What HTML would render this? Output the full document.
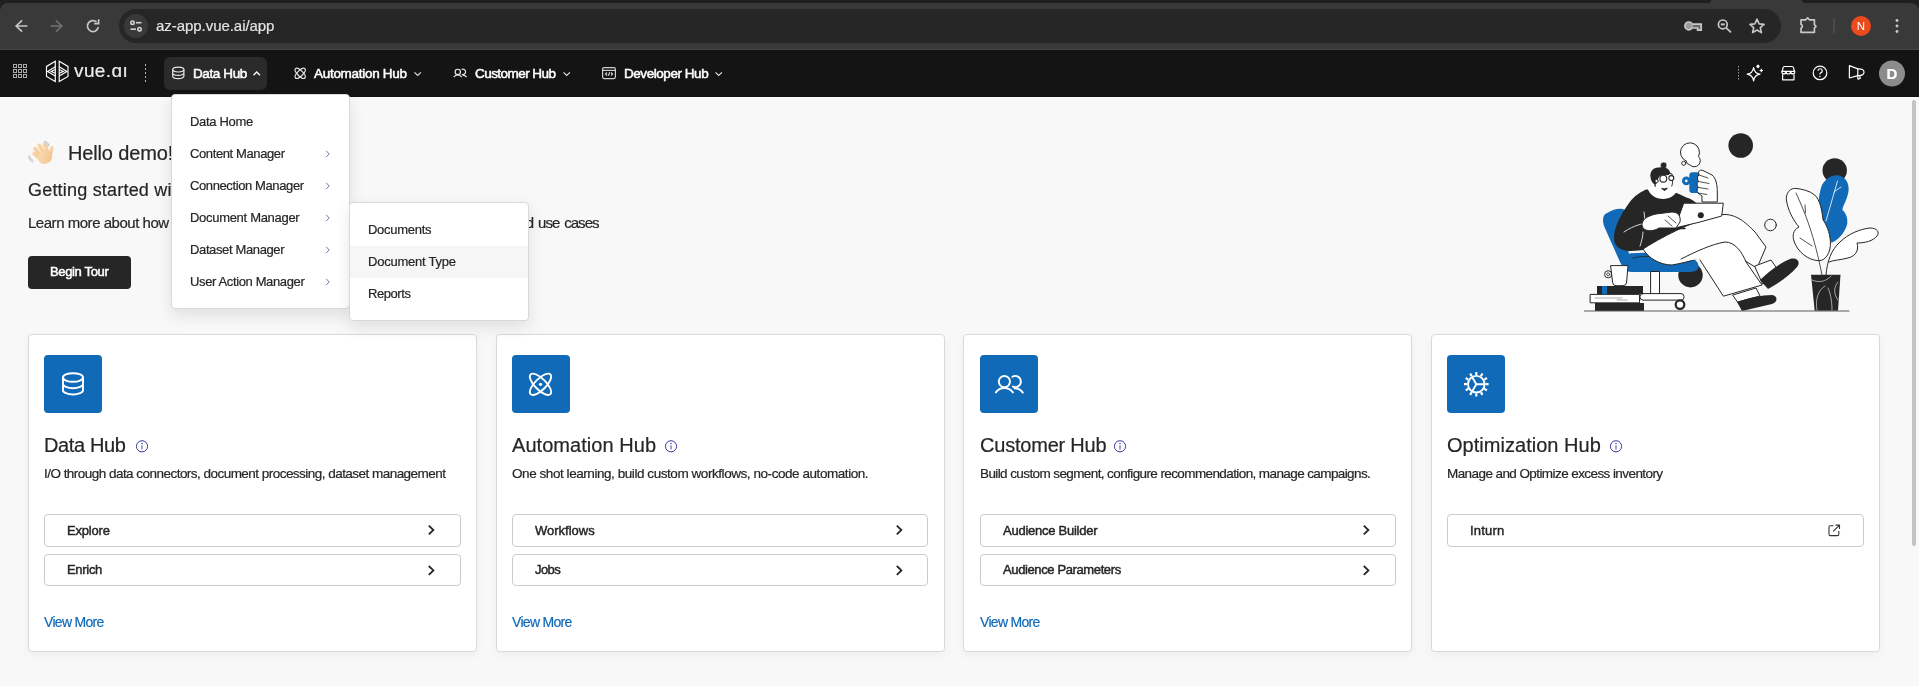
<!DOCTYPE html>
<html><head><meta charset="utf-8">
<style>
*{box-sizing:border-box;margin:0;padding:0}
html,body{width:1919px;height:686px;overflow:hidden;background:#f8f8f8;font-family:"Liberation Sans",sans-serif;color:#262626}
.card,.menu,.t{-webkit-text-stroke:0.2px currentColor}
.a{position:absolute}
.t{position:absolute;white-space:nowrap;line-height:20px;will-change:transform}
svg{position:absolute;overflow:visible}
.nt{will-change:transform;position:absolute;top:64px;color:#fff;font-weight:normal;-webkit-text-stroke:0.5px #fff;font-size:13.5px;letter-spacing:-0.38px;line-height:20px;white-space:nowrap}
.card{will-change:transform;position:absolute;top:334px;width:449px;height:318px;background:#fff;border:1px solid #d9d9d9;border-radius:4px;box-shadow:0 3px 10px rgba(0,0,0,0.045)}
.ib{position:absolute;left:15px;top:20px;width:58px;height:58px;background:#106ab7;border-radius:4px}
.ct{position:absolute;left:15px;top:98px;font-size:20px;line-height:24px;color:#262626;white-space:nowrap}
.cd{position:absolute;left:15px;top:129px;font-size:13.5px;line-height:20px;color:#262626;white-space:nowrap;letter-spacing:-0.53px}
.cb{position:absolute;left:15px;width:417px;height:33px;border:1px solid #cccccc;border-radius:4px;font-weight:normal;-webkit-text-stroke:0.45px #262626;font-size:13px;line-height:31px;padding-left:22px;color:#262626;white-space:nowrap}
.vm{position:absolute;left:15px;top:277px;font-size:14px;color:#106ab7;line-height:20px;letter-spacing:-0.69px}
.menu{will-change:transform;position:absolute;background:#fff;border:1px solid #d9d9d9;border-radius:4px;box-shadow:0 6px 16px rgba(0,0,0,0.10);padding:11px 0 9px}
.mi{height:32px;line-height:32px;font-size:13px;padding-left:18px;color:#262626;position:relative;white-space:nowrap;letter-spacing:-0.35px}
.chev{position:absolute;left:153px;top:12px}
.c3>div{margin-left:1px}
.c3>.cb{width:416px}
</style></head><body>
<!-- browser chrome -->
<div class="a" style="left:0;top:0;width:1919px;height:50px;background:#1f1f1f"></div>
<div class="a" style="left:1703px;top:0;width:107px;height:4px;background:#393939"></div>
<div class="a" style="left:1695px;top:0;width:16px;height:3px;background:#1f1f1f;border-radius:0 0 8px 0"></div>
<div class="a" style="left:1802px;top:0;width:16px;height:3px;background:#1f1f1f;border-radius:0 0 0 8px"></div>
<div class="a" style="left:0;top:3px;width:1919px;height:47px;background:#393939;border-radius:8px 8px 0 0"></div>
<div class="a" style="left:0;top:49px;width:1919px;height:1px;background:#474747"></div>
<div class="a" style="left:119px;top:9px;width:1662px;height:34px;border-radius:17px;background:#262626"></div>
<div class="a" style="left:124px;top:14px;width:24px;height:24px;border-radius:12px;background:#393939"></div>
<div class="t" style="left:156px;top:16px;font-size:15px;color:#e3e3e3;letter-spacing:-0.05px">az-app.vue.ai/app</div>
<svg width="1919" height="50" style="left:0;top:0">
 <g fill="none" stroke="#c8c8c8" stroke-width="1.7" stroke-linecap="square">
  <path d="M26.5 26H16.5M21.5 21L16.2 26L21.5 31"/>
 </g>
 <g fill="none" stroke="#717171" stroke-width="1.7" stroke-linecap="square">
  <path d="M51.5 26H61.5M56.5 21L61.8 26L56.5 31"/>
 </g>
 <g fill="none" stroke="#c8c8c8" stroke-width="1.7">
  <path d="M98.3 27.2A5.5 5.5 0 1 1 96.5 21.9"/>
  <path d="M98.6 20V23.6H95" stroke-linecap="square"/>
 </g>
 <g fill="none" stroke="#d0d0d0" stroke-width="1.6">
  <circle cx="132.5" cy="22.7" r="1.7"/><path d="M136 22.7H141.5"/>
  <path d="M130.5 29.2H136"/><circle cx="139.5" cy="29.2" r="1.7"/>
 </g>
 <!-- key -->
 <g fill="none" stroke="#c8c8c8" stroke-width="1.7">
  <circle cx="1688.8" cy="25.9" r="3.9" fill="#9a9a9a"/>
  <path d="M1692.7 24.2H1701.2V30.2H1697.6V28H1692.7" fill="#6a6a6a"/>
 </g>
 <!-- zoom -->
 <g fill="none" stroke="#c8c8c8" stroke-width="1.7">
  <circle cx="1722.8" cy="24.4" r="4.4"/><path d="M1726.2 27.8L1731 32.4"/><path d="M1720.8 24.4H1724.8" stroke-width="2"/>
 </g>
 <!-- star -->
 <path d="M1757 19.2L1759.1 23.9L1764.1 24.4L1760.3 27.7L1761.4 32.6L1757 30L1752.6 32.6L1753.7 27.7L1749.9 24.4L1754.9 23.9Z" fill="none" stroke="#c8c8c8" stroke-width="1.6" stroke-linejoin="round"/>
 <!-- puzzle -->
 <path d="M1801 19.8H1805.8L1807.6 17.8L1809.4 19.8H1814.4V24.6L1816 26.3L1814.4 28V32.3H1801V28.2A2.2 2.2 0 0 0 1801 24.2Z" fill="none" stroke="#c8c8c8" stroke-width="1.7" stroke-linejoin="round"/>
 <path d="M1834 18.5V33.5" stroke="#5c5c5c" stroke-width="1"/>
 <circle cx="1861" cy="26" r="10" fill="#ec4a1c"/>
 <g fill="#c8c8c8"><circle cx="1897" cy="20.5" r="1.45"/><circle cx="1897" cy="26" r="1.45"/><circle cx="1897" cy="31.5" r="1.45"/></g>
</svg>
<div class="t" style="left:1851px;width:20px;text-align:center;top:15.7px;font-size:11.5px;color:#fff;font-weight:normal;-webkit-text-stroke:0">N</div>

<!-- app nav -->
<div class="a" style="left:0;top:50px;width:1919px;height:47px;background:#141414"></div>
<div class="a" style="left:164px;top:57px;width:103px;height:33px;background:#2a2a2a;border-radius:6px"></div>
<svg width="1919" height="97" style="left:0;top:0">
 <!-- grid -->
 <g fill="none" stroke="#a9a9a9" stroke-width="1">
  <rect x="13.5" y="64.5" width="3" height="3"/><rect x="18.5" y="64.5" width="3" height="3"/><rect x="23.5" y="64.5" width="3" height="3"/>
  <rect x="13.5" y="69.5" width="3" height="3"/><rect x="18.5" y="69.5" width="3" height="3"/><rect x="23.5" y="69.5" width="3" height="3"/>
  <rect x="13.5" y="74.5" width="3" height="3"/><rect x="18.5" y="74.5" width="3" height="3"/><rect x="23.5" y="74.5" width="3" height="3"/>
 </g>
 <!-- logo -->
 <g fill="none" stroke="#fff" stroke-width="1.15" stroke-linejoin="miter">
  <path d="M55.3 61.3L46.5 66.4V76.4L55.3 81.6Z"/>
  <path d="M55.3 66.7L47.6 71.4L55.3 76.1"/>
  <path d="M55.3 69.5L51.2 71.4L55.3 73.3"/>
  <path d="M59.2 61.3L68.0 66.4V76.4L59.2 81.6Z"/>
  <path d="M59.2 66.7L66.9 71.4L59.2 76.1"/>
  <path d="M59.2 69.5L63.3 71.4L59.2 73.3"/>
 </g>
 <path d="M145.5 64V82" stroke="#b0b0b0" stroke-width="1" stroke-dasharray="2 2"/>
 <!-- db icon -->
 <g fill="none" stroke="#e6e6e6" stroke-width="1.2">
  <ellipse cx="178.3" cy="69.6" rx="5.6" ry="2.4"/>
  <path d="M172.7 69.6V76.3A5.6 2.4 0 0 0 183.9 76.3V69.6M172.7 73A5.6 2.4 0 0 0 183.9 73"/>
 </g>
 <path d="M253.5 75.2L256.7 72L259.9 75.2" fill="none" stroke="#fff" stroke-width="1.3"/>
 <!-- atom -->
 <g fill="none" stroke="#e6e6e6" stroke-width="1.2">
  <ellipse cx="300.2" cy="73.3" rx="6.6" ry="2.7" transform="rotate(45 300.2 73.3)"/>
  <ellipse cx="300.2" cy="73.3" rx="6.6" ry="2.7" transform="rotate(-45 300.2 73.3)"/>
 </g>
 <path d="M414.5 72.3L417.7 75.5L420.9 72.3" fill="none" stroke="#ddd" stroke-width="1.2"/>
 <!-- customers -->
 <g fill="none" stroke="#e6e6e6" stroke-width="1.2">
  <g transform="translate(446.2 59.3) scale(0.475)" stroke-width="2.5"><circle cx="24.4" cy="26.6" r="5.6"/><path d="M15.8 37.4A10.6 10.6 0 0 1 32.9 37.4"/><path d="M32.4 21.7A5.6 5.6 0 1 1 32.9 31.6"/><path d="M34.6 33.2A10 10 0 0 1 42.8 37.6"/></g>
 </g>
 <path d="M563.5 72.3L566.7 75.5L569.9 72.3" fill="none" stroke="#ddd" stroke-width="1.2"/>
 <!-- developer -->
 <g fill="none" stroke="#cfcfcf" stroke-width="1.2">
  <rect x="602.6" y="67.6" width="12.8" height="11" rx="1.5"/>
  <path d="M602.6 70.4H615.4"/>
  <path d="M607 72.5L605.5 74L607 75.5M611 72.5L612.5 74L611 75.5M609.7 72.2L608.3 75.8"/>
 </g>
 <path d="M715.5 72.3L718.7 75.5L721.9 72.3" fill="none" stroke="#ddd" stroke-width="1.2"/>
 <!-- right icons -->
 <path d="M1738.5 66V81" stroke="#9a9a9a" stroke-width="1" stroke-dasharray="1.5 1.5"/>
 <g fill="none" stroke="#fff" stroke-width="1.2" stroke-linejoin="round">
  <path d="M1753.6 67.6Q1754.5 73.3 1760 74.2Q1754.5 75.1 1753.6 80.8Q1752.7 75.1 1747.2 74.2Q1752.7 73.3 1753.6 67.6Z"/>
  <path d="M1761.3 68.8V72.2M1759.6 70.5H1763"/>
  <path d="M1758 65.2L1759.2 66.4L1758 67.6L1756.8 66.4Z" fill="#fff"/>
  <path d="M1782.3 71.2L1783 67.8Q1783.3 66.5 1784.6 66.5H1792Q1793.3 66.5 1793.6 67.8L1794.3 71.2"/>
  <path d="M1781.8 71.4H1794.8Q1795 73.8 1792.9 73.9Q1790.8 73.9 1790.6 71.6Q1790.4 74 1788.3 74Q1786.2 74 1786 71.6Q1785.8 73.9 1783.7 73.9Q1781.6 73.8 1781.8 71.4Z"/>
  <path d="M1782.6 74.2V79.8H1794V74.2"/>
  <circle cx="1820" cy="72.9" r="6.8"/>
  <path d="M1818 70.8A2.1 2.1 0 1 1 1820.5 72.9Q1819.9 73.3 1819.9 74.6"/>
  <path d="M1849.4 65.6V78L1857.8 75.6Q1864 75.8 1864 72.2Q1864 68.6 1857.8 68.9Z"/>
  <path d="M1857.8 68.9V75.6M1857.5 75.6L1858 79.2L1860.2 78.5L1859.8 75.6"/>
 </g>
 <circle cx="1819.9" cy="76.4" r="0.75" fill="#fff"/>
 <circle cx="1892" cy="73.5" r="13" fill="#8c8c8c"/>
</svg>
<div class="t" style="left:74px;top:58.5px;font-size:19px;color:#ececec;letter-spacing:0.4px;line-height:24px">vue.ɑı</div>
<div class="nt" style="left:193px">Data Hub</div>
<div class="nt" style="left:314px;letter-spacing:-0.29px">Automation Hub</div>
<div class="nt" style="left:475px;letter-spacing:-0.55px">Customer Hub</div>
<div class="nt" style="left:624px;letter-spacing:-0.45px">Developer Hub</div>
<div class="t" style="left:1879px;width:26px;text-align:center;top:63.5px;font-size:15px;font-weight:bold;color:#fff">D</div>

<!-- hello section -->
<svg width="1919" height="686" style="left:0;top:0">
 <defs><linearGradient id="hg" x1="0" y1="0" x2="1" y2="1"><stop offset="0" stop-color="#fbdcb4"/><stop offset="1" stop-color="#f2c28e"/></linearGradient></defs>
 <g fill="url(#hg)">
  <rect x="35.5" y="146" width="3.8" height="12" rx="1.9" transform="rotate(-38 37.4 152)"/>
  <rect x="39.5" y="143" width="3.8" height="13" rx="1.9" transform="rotate(-30 41.4 149.5)"/>
  <rect x="35" y="150.5" width="3.8" height="11" rx="1.9" transform="rotate(-50 36.9 156)"/>
  <rect x="44" y="142.5" width="3.8" height="12" rx="1.9" transform="rotate(-25 45.9 148.5)"/>
  <rect x="49.3" y="146" width="3.6" height="10" rx="1.8" transform="rotate(12 51.1 151)"/>
  <ellipse cx="45" cy="157" rx="7.5" ry="6.8" transform="rotate(-35 45 157)"/>
 </g>
 <g fill="none" stroke="#b5b5b5" stroke-width="0.9">
  <path d="M43.5 141.5Q47 143 48 147M45 141Q48.5 142.5 49.2 146"/>
  <path d="M29 155Q30 159 33.5 161M28.5 157Q29.5 161 33 162.5"/>
 </g>
</svg>

<div class="t" style="left:67.5px;top:140.7px;font-size:20px;line-height:24px;letter-spacing:-0.15px">Hello demo! Welcome back</div>
<div class="t" style="left:28px;top:178px;font-size:18px;line-height:24px;letter-spacing:0.2px">Getting started with vue.ai platform</div>
<div class="t" style="left:28px;top:213px;font-size:15px;letter-spacing:-0.47px">Learn more about how vue.ai can help your business</div>
<div class="t" style="left:511px;top:213px;font-size:15px;letter-spacing:-0.95px;word-spacing:1.6px">and use cases</div>
<div class="a" style="left:28px;top:256px;width:103px;height:33px;background:#262626;border-radius:4px"></div>
<div class="t" style="left:50px;top:262px;font-size:13px;font-weight:normal;-webkit-text-stroke:0.5px #fff;color:#fff;letter-spacing:-0.35px">Begin Tour</div>

<!-- illustration placeholder -->
<svg width="1919" height="686" style="left:0;top:0">
 <g stroke="#262626" stroke-width="1" stroke-linejoin="round" stroke-linecap="round">
  <circle cx="1740.7" cy="145.5" r="12.3" fill="#262626" stroke="none"/>
  <circle cx="1834.7" cy="170.5" r="12.2" fill="#262626" stroke="none"/>
  <circle cx="1770.5" cy="225" r="5.8" fill="none"/>
  <!-- thought bubble -->
  <path d="M1686 161A9.5 9.5 0 1 1 1698.5 156.5A5 5 0 1 1 1690 165A5 5 0 0 1 1686 161Z" fill="#fff"/>
  <circle cx="1683.7" cy="163.3" r="2" fill="#fff"/>
  <!-- plant -->
  <path d="M1837.6 175.3C1845 176 1850 183 1848.4 192C1847 200 1843 205 1842.4 210C1846 213 1848 218 1847.2 224C1845 233 1838 240 1831.6 242.7C1825 236 1819 224 1818.3 210C1818 200 1820 190 1822 185C1826 178 1832 175 1837.6 175.3Z" fill="#106ab7" stroke="none"/>
  <path d="M1837.5 181L1826 221M1834 192L1841 187" stroke="#fff" fill="none" stroke-width="0.8"/>
  <path d="M1796.7 188.5C1790 187 1785 194 1786.6 201C1788 210 1793 220 1799 227C1793 230 1792 236 1794.3 242C1798 252 1808 260 1818.3 260.7C1826 261 1831 252 1830.4 241.5C1830 232 1826 224 1823 219.8C1822 210 1820 200 1814.7 195C1810 191 1802 189 1796.7 188.5Z" fill="#fff"/>
  <path d="M1796 193C1806 215 1814 235 1822 275M1805 205L1805.5 213M1800 238L1812 246" fill="none" stroke-width="0.8"/>
  <path d="M1826 275C1827 262 1831 250 1840 242C1848 234 1860 229 1870 228C1877 228 1880 232 1877 236C1873 241 1865 243 1857 243C1859 250 1856 256 1848 258C1840 260 1834 260 1829 262" fill="#fff"/>
  <path d="M1811 274.7H1840.5L1838 310.8H1814.7Z" fill="#262626" stroke="none"/>
  <path d="M1812 280C1818 283 1826 282 1831 276M1817 310C1815 300 1818 290 1825 286M1838 300C1834 295 1833 288 1838 282M1832 310C1832 300 1830 292 1828 288" stroke="#ddd" stroke-width="0.7" fill="none"/>
  <!-- chair -->
  <circle cx="1690.5" cy="275.2" r="12.2" fill="#262626" stroke="none"/>
  <path d="M1607 213C1603 214 1602 220 1604 226L1620 262C1622 266 1626 268 1630 268L1625 210C1620 207 1612 210 1607 213Z" fill="#106ab7" stroke="none"/>
  <path d="M1620 255C1640 251 1665 253 1690 258C1699 260 1700 267 1697 270C1694 272 1690 272 1686 272H1632C1624 272 1620 266 1620 255Z" fill="#106ab7" stroke="none"/>
  <path d="M1633 258C1645 255 1660 256 1684 261" stroke="#262626" fill="none" stroke-width="0.8"/>
  <rect x="1651" y="271.5" width="8.5" height="22.5" fill="#fff"/>
  <rect x="1640" y="293.6" width="44" height="6.5" rx="3" fill="#fff"/>
  <circle cx="1680" cy="304.6" r="4.3" fill="#fff" stroke="#262626" stroke-width="2.2"/>
  <!-- torso -->
  <path d="M1646 189.5C1638 193 1632 198 1627 206C1620 216 1614 228 1614 238C1614 246 1620 251 1630 251C1645 251 1660 246 1675 240L1700 232L1703 212C1700 205 1693 199 1686.4 197.5C1678 193 1670 190 1662 190Z" fill="#262626" stroke="none"/>
  <path d="M1624 232C1634 225 1645 222 1660 222M1644 212L1645 220M1640 246C1642 240 1643 236 1643 232" stroke="#fff" stroke-width="0.8" fill="none"/>
  <!-- head -->
  <path d="M1655 186L1656 180C1655 176 1658 172 1664 172L1672 174C1673 180 1673 186 1670 189L1667 191C1663 192 1658 190 1655 186Z" fill="#fff"/>
  <path d="M1647.5 188.5C1652 186 1655 186 1658 187L1664 190L1670 187C1673 186 1676 187 1678 189C1676 195 1670 199 1663 199C1656 199 1650 195 1647.5 188.5Z" fill="#fff" stroke="none"/>
  <circle cx="1663.7" cy="165.4" r="3.4" fill="#262626" stroke="#fff" stroke-width="0.7"/>
  <path d="M1650.5 177C1649.5 171 1654 167 1659 167.5C1664 166.5 1669 168 1670.2 172.5C1670.5 175 1668 175.5 1664 175C1660 175 1658.5 177 1658 180C1657.5 183 1656 185 1654.5 184.5C1652 183 1650.8 180 1650.5 177Z" fill="#262626" stroke="none"/>
  <circle cx="1656.6" cy="181" r="1.6" fill="#fff" stroke-width="0.8"/>
  <circle cx="1663.3" cy="178.7" r="3.4" fill="#fff" stroke-width="1.1"/>
  <circle cx="1671.3" cy="178.1" r="2.5" fill="#fff" stroke-width="1.1"/>
  <path d="M1662 188.5L1664.5 190.3L1667 188.2" fill="#262626" stroke-width="1.3"/>
  <!-- mug + hand -->
  <rect x="1689.3" y="172.3" width="10.8" height="20.8" rx="3" fill="#106ab7" stroke="none"/>
  <circle cx="1686.3" cy="180.9" r="4.3" fill="#106ab7" stroke="none"/>
  <circle cx="1686.3" cy="180.9" r="1.3" fill="#fff" stroke="none"/>
  <path d="M1702 201.6V196L1698 193C1696.5 191 1697 188.5 1698.5 187.5C1697 186 1696.5 183 1698.5 181.5C1697 179.5 1697 176 1699 175L1698.5 172.5C1699 170 1701 169.5 1704 171L1712 175C1716 178 1717.3 185 1717.3 192V201.6Z" fill="#fff"/>
  <path d="M1698.5 181.5L1709 183.5M1698.5 187.5L1708 189M1698 193L1707 194.5M1699 175L1708 178" fill="none" stroke-width="0.8"/>
  <!-- legs -->
  <path d="M1643 249C1660 238 1690 222 1718 215C1735 212 1745 222 1755 232L1766 247L1757 268C1748 263 1738 256 1728 250C1710 255 1690 262 1672 265C1660 265 1648 258 1643 249Z" fill="#fff"/>
  <path d="M1681 259C1695 252 1712 244 1725 242C1735 242 1742 252 1746 262L1762 285L1723.4 296.2L1700 260" fill="#fff"/>
  <path d="M1755 266L1771 260L1778 270L1763 284Z" fill="#fff"/>
  <path d="M1733 295L1756 288L1760 296L1738 302Z" fill="#fff"/>
  <path d="M1760 280C1768 272 1780 263 1790 259C1797 257 1801 262 1797 267C1790 275 1779 283 1768 289Z" fill="#262626" stroke="none"/>
  <path d="M1737 302C1748 298 1762 295 1772 295C1778 296 1778 302 1772 304L1742 311Z" fill="#262626" stroke="none"/>
  <!-- laptop -->
  <path d="M1684 203.2H1723.3L1721.7 216L1700 222L1675 228Z" fill="#fff"/>
  <path d="M1657.5 228.5H1685" fill="none" stroke-width="1.4"/>
  <circle cx="1700.8" cy="215.2" r="3" fill="#262626" stroke="none"/>
  <!-- hand on laptop -->
  <path d="M1642 226C1641 220 1647 216 1656 214L1672 212C1678 212 1681 216 1680 222L1676 228H1659C1653 232 1644 232 1642 226Z" fill="#fff"/>
  <path d="M1668 216L1676 223M1665 220L1672 226" fill="none" stroke-width="0.8"/>
  <!-- books & cup -->
  <rect x="1595" y="303" width="49" height="8" fill="#262626" stroke="none"/>
  <rect x="1590.5" y="294.4" width="49" height="8.4" fill="#fff"/>
  <path d="M1595 298H1622M1617 300H1627" stroke-width="0.7" fill="none" stroke="#888"/>
  <rect x="1597" y="286" width="46" height="8" fill="#262626" stroke="none"/>
  <rect x="1602" y="286" width="5" height="8" fill="#106ab7" stroke="none"/>
  <circle cx="1608.2" cy="274.3" r="3.6" fill="#fff"/>
  <circle cx="1608.2" cy="274.3" r="1.5" fill="none" stroke-width="0.8"/>
  <path d="M1611 265.6H1628L1626.5 283Q1626 285.7 1623 285.7H1616Q1613 285.7 1612.7 283Z" fill="#fff"/>

  <path d="M1584.4 311H1849" stroke="#5a5a5a" stroke-width="1.2"/>
 </g>
</svg>

<!-- cards -->
<div class="card" style="left:28px">
 <div class="ib"><svg width="58" height="58" style="left:0;top:0"><g fill="none" stroke="#fff" stroke-width="1.9"><ellipse cx="29" cy="22.5" rx="10" ry="4.3"/><path d="M19 22.5V35.2A10 4.3 0 0 0 39 35.2V22.5M19 28.9A10 4.3 0 0 0 39 28.9"/></g></svg></div>
 <div class="ct" style="letter-spacing:-0.37px">Data Hub</div>
 <div class="cd">I/O through data connectors, document processing, dataset management</div>
 <div class="cb" style="top:179px;letter-spacing:-0.2px">Explore</div>
 <div class="cb" style="top:219px;height:32px;line-height:29px;letter-spacing:-0.3px">Enrich</div>
 <div class="vm">View More</div>
</div>
<div class="card" style="left:496px">
 <div class="ib"><svg width="58" height="58" style="left:0;top:0"><g fill="none" stroke="#fff" stroke-width="1.9"><ellipse cx="28.5" cy="29.3" rx="14" ry="5.6" transform="rotate(45 28.5 29.3)"/><ellipse cx="28.5" cy="29.3" rx="14" ry="5.6" transform="rotate(-45 28.5 29.3)"/></g><circle cx="28.5" cy="29.3" r="1.6" fill="#fff"/></svg></div>
 <div class="ct" style="letter-spacing:0.05px">Automation Hub</div>
 <div class="cd" style="letter-spacing:-0.44px">One shot learning, build custom workflows, no-code automation.</div>
 <div class="cb" style="top:179px;width:416px;letter-spacing:0px">Workflows</div>
 <div class="cb" style="top:219px;width:416px;height:32px;line-height:29px;letter-spacing:-0.6px">Jobs</div>
 <div class="vm">View More</div>
</div>
<div class="card c3" style="left:963px">
 <div class="ib"><svg width="58" height="58" style="left:0;top:0"><g fill="none" stroke="#fff" stroke-width="1.9" stroke-linecap="round"><circle cx="24.4" cy="26.6" r="5.6"/><path d="M15.8 37.4A10.6 10.6 0 0 1 32.9 37.4"/><path d="M32.4 21.7A5.6 5.6 0 1 1 32.9 31.6"/><path d="M34.6 33.2A10 10 0 0 1 42.8 37.6"/></g></svg></div>
 <div class="ct" style="letter-spacing:-0.21px">Customer Hub</div>
 <div class="cd" style="letter-spacing:-0.6px">Build custom segment, configure recommendation, manage campaigns.</div>
 <div class="cb" style="top:179px;letter-spacing:-0.25px">Audience Builder</div>
 <div class="cb" style="top:219px;height:32px;line-height:29px;letter-spacing:-0.38px">Audience Parameters</div>
 <div class="vm">View More</div>
</div>
<div class="card" style="left:1431px">
 <div class="ib"><svg width="58" height="58" style="left:0;top:0"><g fill="none" stroke="#fff" stroke-width="1.9" stroke-linecap="butt"><circle cx="29.3" cy="29.2" r="8.3"/><path d="M29.30 29.20L37.60 29.20M29.30 29.20L25.15 36.39M29.30 29.20L25.15 22.01"/><path d="M38.50 29.20L41.60 29.20M37.27 33.80L39.95 35.35M33.90 37.17L35.45 39.85M29.30 38.40L29.30 41.50M24.70 37.17L23.15 39.85M21.33 33.80L18.65 35.35M20.10 29.20L17.00 29.20M21.33 24.60L18.65 23.05M24.70 21.23L23.15 18.55M29.30 20.00L29.30 16.90M33.90 21.23L35.45 18.55M37.27 24.60L39.95 23.05" stroke-width="2.2"/></g></svg></div>
 <div class="ct" style="letter-spacing:0.03px">Optimization Hub</div>
 <div class="cd" style="letter-spacing:-0.58px">Manage and Optimize excess inventory</div>
 <div class="cb" style="top:179px;letter-spacing:0.2px">Inturn</div>
</div>

<svg width="1919" height="686" style="left:0;top:0"><circle cx="142.0" cy="446.3" r="5.6" fill="none" stroke="#3b3b9c" stroke-width="1"/><circle cx="142.0" cy="443.6" r="0.75" fill="#3b3b9c"/><path d="M142.0 445.3V449.4" stroke="#3b3b9c" stroke-width="0.95"/><circle cx="671.0" cy="446.3" r="5.6" fill="none" stroke="#3b3b9c" stroke-width="1"/><circle cx="671.0" cy="443.6" r="0.75" fill="#3b3b9c"/><path d="M671.0 445.3V449.4" stroke="#3b3b9c" stroke-width="0.95"/><circle cx="1120.0" cy="446.3" r="5.6" fill="none" stroke="#3b3b9c" stroke-width="1"/><circle cx="1120.0" cy="443.6" r="0.75" fill="#3b3b9c"/><path d="M1120.0 445.3V449.4" stroke="#3b3b9c" stroke-width="0.95"/><circle cx="1616.0" cy="446.3" r="5.6" fill="none" stroke="#3b3b9c" stroke-width="1"/><circle cx="1616.0" cy="443.6" r="0.75" fill="#3b3b9c"/><path d="M1616.0 445.3V449.4" stroke="#3b3b9c" stroke-width="0.95"/><path d="M428.8 525.6L433.4 530.0L428.8 534.4" fill="none" stroke="#262626" stroke-width="1.8"/><path d="M428.8 566.0L433.4 570.4L428.8 574.8" fill="none" stroke="#262626" stroke-width="1.8"/><path d="M896.8 525.6L901.4 530.0L896.8 534.4" fill="none" stroke="#262626" stroke-width="1.8"/><path d="M896.8 566.0L901.4 570.4L896.8 574.8" fill="none" stroke="#262626" stroke-width="1.8"/><path d="M1363.8 525.6L1368.4 530.0L1363.8 534.4" fill="none" stroke="#262626" stroke-width="1.8"/><path d="M1363.8 566.0L1368.4 570.4L1363.8 574.8" fill="none" stroke="#262626" stroke-width="1.8"/><g fill="none" stroke="#333" stroke-width="1.1" stroke-linejoin="round"><path d="M1833.5 525.8H1830.4Q1829 525.8 1829 527.2V534.2Q1829 535.6 1830.4 535.6H1837.4Q1838.8 535.6 1838.8 534.2V531"/><path d="M1833.2 531.4L1839.3 525.3M1835.6 525.1H1839.5V529"/></g></svg>
<div class="a" style="left:1912px;top:100px;width:4px;height:446px;background:#c4c4c4;border-radius:2px"></div>
<!-- menus -->
<div class="menu" style="left:171px;top:94px;width:179px;height:215px">
 <div class="mi" style="letter-spacing:-0.32px">Data Home</div>
 <div class="mi" style="letter-spacing:-0.39px">Content Manager<svg width="6" height="8" class="chev"><path d="M1.2 0.8L4.2 3.9L1.2 7" fill="none" stroke="#7474a8" stroke-width="1"/></svg></div>
 <div class="mi" style="letter-spacing:-0.39px">Connection Manager<svg width="6" height="8" class="chev"><path d="M1.2 0.8L4.2 3.9L1.2 7" fill="none" stroke="#7474a8" stroke-width="1"/></svg></div>
 <div class="mi" style="letter-spacing:-0.3px">Document Manager<svg width="6" height="8" class="chev"><path d="M1.2 0.8L4.2 3.9L1.2 7" fill="none" stroke="#7474a8" stroke-width="1"/></svg></div>
 <div class="mi" style="letter-spacing:-0.37px">Dataset Manager<svg width="6" height="8" class="chev"><path d="M1.2 0.8L4.2 3.9L1.2 7" fill="none" stroke="#7474a8" stroke-width="1"/></svg></div>
 <div class="mi" style="letter-spacing:-0.37px">User Action Manager<svg width="6" height="8" class="chev"><path d="M1.2 0.8L4.2 3.9L1.2 7" fill="none" stroke="#7474a8" stroke-width="1"/></svg></div>
</div>
<div class="menu" style="left:349px;top:202px;width:180px;height:119px">
 <div class="mi" style="letter-spacing:-0.28px">Documents</div>
 <div class="mi" style="background:#f6f6f6;letter-spacing:-0.24px">Document Type</div>
 <div class="mi" style="letter-spacing:-0.44px">Reports</div>
</div>
</body></html>
